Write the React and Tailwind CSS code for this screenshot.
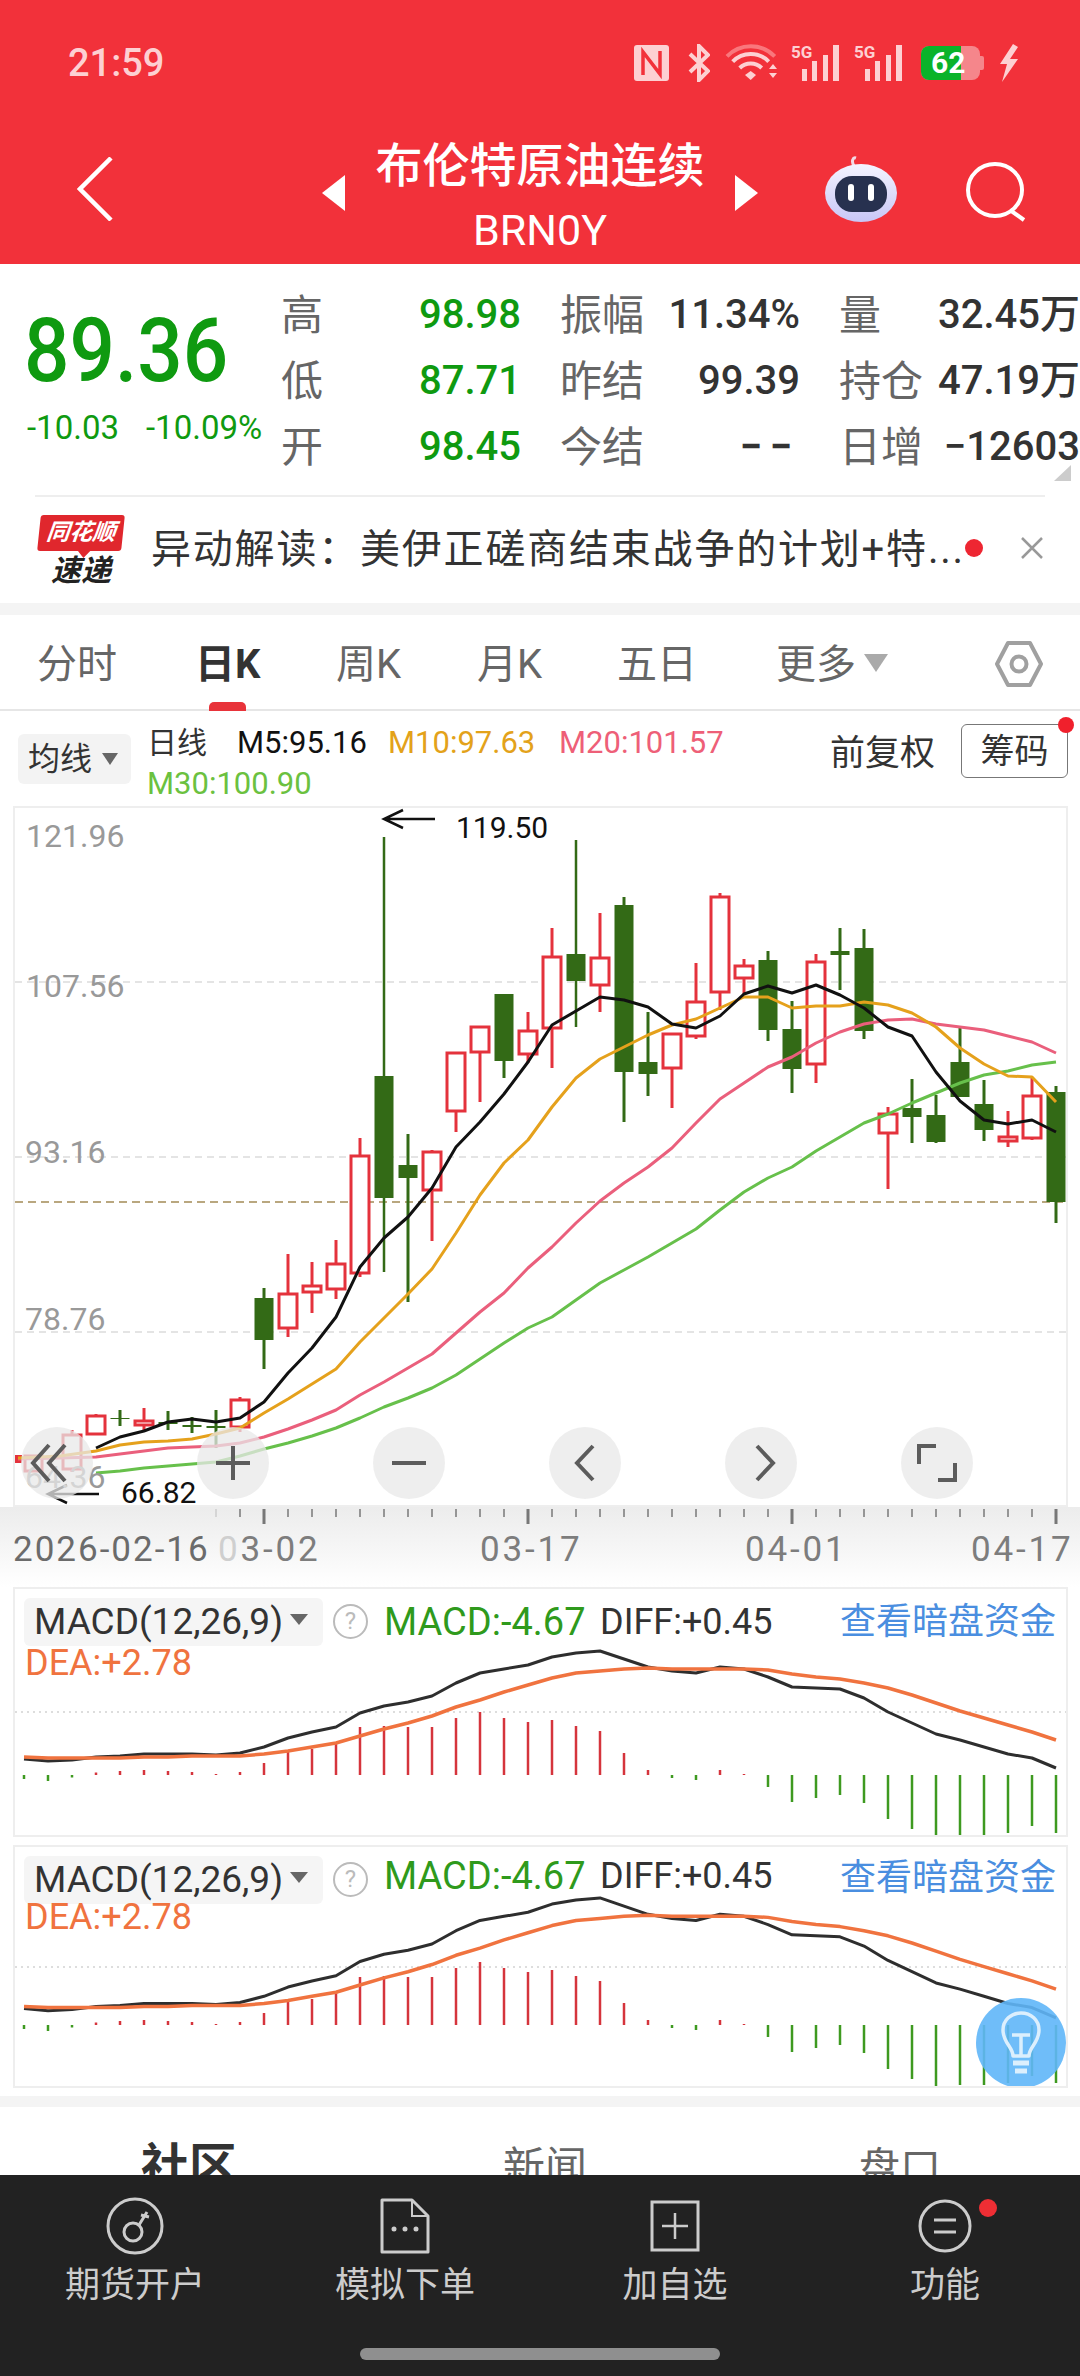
import React from "react";

// Daily candles: [x, high, bodyTop, bodyBottom, low, direction]
const candles = [
  [72, 1430, 1434, 1470, 1472, "r"], [96, 1414, 1415, 1435, 1435, "r"], [120, 1410, 1418, 1419, 1426, "g"],
  [144, 1408, 1420, 1426, 1430, "r"], [168, 1411, 1422, 1424, 1430, "g"], [192, 1417, 1425, 1427, 1433, "g"],
  [216, 1410, 1426, 1428, 1448, "g"], [240, 1397, 1399, 1428, 1432, "r"], [264, 1288, 1298, 1340, 1369, "g"],
  [288, 1254, 1293, 1329, 1337, "r"], [312, 1262, 1285, 1293, 1313, "r"], [336, 1240, 1263, 1290, 1299, "r"],
  [360, 1138, 1155, 1274, 1277, "r"], [384, 837, 1076, 1198, 1272, "g"], [408, 1134, 1165, 1178, 1302, "g"],
  [432, 1150, 1151, 1191, 1241, "r"], [456, 1052, 1052, 1112, 1132, "r"], [480, 1026, 1026, 1053, 1102, "r"],
  [504, 994, 994, 1061, 1078, "g"], [528, 1012, 1030, 1055, 1063, "r"], [552, 928, 956, 1029, 1068, "r"],
  [576, 840, 954, 981, 1027, "g"], [600, 913, 957, 986, 1012, "r"], [624, 897, 905, 1072, 1122, "g"],
  [648, 1012, 1062, 1074, 1096, "g"], [672, 1033, 1033, 1069, 1108, "r"], [696, 963, 1001, 1037, 1039, "r"],
  [720, 893, 896, 993, 1010, "r"], [744, 959, 965, 979, 995, "r"], [768, 951, 960, 1030, 1041, "g"],
  [792, 1001, 1029, 1069, 1093, "g"], [816, 954, 961, 1065, 1083, "r"], [840, 928, 951, 955, 990, "g"],
  [864, 929, 948, 1031, 1039, "g"], [888, 1107, 1113, 1134, 1189, "r"], [912, 1079, 1108, 1117, 1143, "g"],
  [936, 1095, 1115, 1142, 1143, "g"], [960, 1027, 1062, 1097, 1097, "g"], [984, 1080, 1104, 1130, 1141, "g"],
  [1008, 1111, 1136, 1142, 1147, "r"], [1032, 1077, 1095, 1139, 1140, "r"], [1056, 1086, 1092, 1202, 1223, "g"],
];

const m5 = [1448,1437,1431,1422,1419,1422,1418,1402,1373,1348,1317,1267,1238,1217,1188,1147,1122,1094,1062,1025,1011,997,1000,1007,1024,1028,1016,994,986,993,985,995,1008,1027,1036,1072,1101,1120,1124,1120,1132];
const m10 = [1451,1445,1442,1441,1439,1434,1428,1413,1399,1384,1369,1342,1318,1294,1269,1233,1195,1163,1140,1107,1078,1059,1047,1035,1025,1019,1008,997,997,1008,1006,1006,1002,1005,1013,1027,1048,1064,1076,1077,1102];
const m20 = [1457,1454,1451,1448,1447,1446,1443,1437,1429,1420,1410,1395,1382,1368,1354,1333,1312,1293,1268,1247,1223,1201,1183,1167,1148,1123,1099,1083,1067,1057,1043,1032,1024,1020,1019,1024,1027,1030,1036,1042,1053];
const m30 = [1473,1471,1468,1466,1464,1462,1456,1449,1443,1436,1428,1418,1407,1398,1388,1375,1359,1343,1328,1317,1300,1283,1270,1257,1243,1229,1210,1192,1178,1167,1151,1137,1123,1114,1103,1093,1083,1075,1071,1065,1062];

const line = (ys, start = 96, lead = "") =>
  lead + ys.map((y, i) => `${start + 24 * i},${y}`).join(" ");

// MACD series, page y in the first panel
const diff = [1759,1761,1760,1757,1756,1754,1754,1754,1755,1753,1747,1738,1732,1727,1713,1706,1702,1696,1683,1673,1669,1665,1657,1653,1651,1659,1667,1671,1673,1667,1669,1677,1687,1688,1689,1698,1712,1723,1734,1740,1747,1754,1758,1768];
const dea = [1757,1758,1758,1758,1758,1757,1757,1756,1756,1756,1754,1751,1747,1743,1736,1729,1723,1716,1707,1700,1692,1685,1678,1673,1671,1669,1668,1669,1669,1669,1669,1670,1674,1677,1679,1683,1688,1695,1703,1711,1718,1725,1732,1740];
const hist = [-4,-6,-2.5,2.5,4,5,4,3,1,3,12,23,26,33,48,49,48,48,57,63,57,53,55,49,44,22,5,-3,-5,5,1,-12,-27,-23,-20,-28,-44,-54,-62,-60,-60,-58,-51,-58];

function Candle({ c }) {
  const [x, hi, top, bot, lo, dir] = c;
  const colour = dir === "r" ? "#e4323c" : "#336a16";
  return (
    <g>
      <line x1={x} x2={x} y1={hi} y2={lo} stroke={colour} strokeWidth={x === 384 || x === 576 ? 2.5 : 3} />
      {dir === "r" ? (
        <rect x={x - 9} y={top + 1} width={18} height={Math.max(bot - top - 2, 2)} fill="#fff" stroke={colour} strokeWidth={3} />
      ) : (
        <rect x={x - 9.5} y={top} width={19} height={bot - top} fill={colour} />
      )}
    </g>
  );
}

function KChart() {
  return (
    <svg className="absolute inset-0" width="1051" height="697" viewBox="15 808 1051 697">
      {[982, 1157, 1332].map((y) => (
        <line key={y} x1="15" x2="1066" y1={y} y2={y} stroke="#dcdcdc" strokeWidth="1.5" strokeDasharray="7 5" />
      ))}
      <line x1="15" x2="1066" y1="1202" y2="1202" stroke="#b9a77f" strokeWidth="2" strokeDasharray="8 5" />
      <rect x="13" y="1455" width="9" height="8" fill="#e4323c" />
      <rect x="25" y="1456" width="17" height="15" fill="#fff" stroke="#e4323c" strokeWidth="3" />
      {candles.map((c) => (
        <Candle key={c[0]} c={c} />
      ))}
      <g fill="none" strokeWidth="3" strokeLinejoin="round">
        <polyline points={line(m30)} stroke="#67c04b" />
        <polyline points={line(m20, 96, "18,1459 60,1458 ")} stroke="#ea5f7c" />
        <polyline points={line(m10, 96, "18,1458 60,1456 ")} stroke="#e5a11c" />
        <polyline points={line(m5)} stroke="#111111" />
      </g>
      <path d="M384 819H435M403 810L384 819L403 828" fill="none" stroke="#111" strokeWidth="2.5" />
      <path d="M48 1494H99M67 1485L48 1494L67 1503" fill="none" stroke="#111" strokeWidth="2.5" />
    </svg>
  );
}

function RoundButton({ children }) {
  return (
    <div className="w-[72px] h-[72px] rounded-full bg-[#e8e8e8]/75 flex items-center justify-center">
      <svg width="72" height="72" viewBox="0 0 72 72" fill="none" stroke="#5c5c5c" strokeWidth="4">
        {children}
      </svg>
    </div>
  );
}

function MacdPanel({ top, height, stretch, zero, dotted, dense }) {
  const mapY = (y) => zero - (1775 - y) * stretch;
  const pts = (arr) => arr.map((y, i) => `${24 + 24 * i},${mapY(y)}`).join(" ");
  return (
    <div className={`relative ml-[13px] w-[1055px] border-2 border-[#eeeeee] overflow-hidden ${height}`}>
      <svg className="absolute inset-0" width="1051" height="250" viewBox={`15 ${top + 2} 1051 250`}>
        <line x1="15" x2="1066" y1={dotted} y2={dotted} stroke="#dddddd" strokeWidth="2" strokeDasharray="2 4" />
        {hist.map((h, i) => (
          <line key={i} x1={24 + 24 * i} x2={24 + 24 * i} y1={zero} y2={zero - h} stroke={h > 0 ? "#d5343c" : "#3e9a20"} strokeWidth="2.5" />
        ))}
        <polyline points={pts(diff)} fill="none" stroke="#2e2e2e" strokeWidth="3" strokeLinejoin="round" />
        <polyline points={pts(dea)} fill="none" stroke="#f0733f" strokeWidth="3.5" strokeLinejoin="round" />
      </svg>
      <div className="relative flex items-start pl-[9px] pt-[9px]">
        <div className="w-[299px] h-[48px] rounded-[6px] bg-[#f4f4f4]/90 flex items-center pl-[10px] text-[37px] text-[#333333]">
          MACD(12,26,9)
          <span className="ml-[7px] -mt-[6px] w-0 h-0 border-x-[9px] border-x-transparent border-t-[11px] border-t-[#666666]" />
        </div>
        <div className="ml-[10px] mt-[6px] w-[35px] h-[35px] rounded-full border-2 border-[#bbbbbb] text-[#bbbbbb] text-[24px] leading-[31px] text-center">?</div>
        <div className={`ml-[16px] flex items-center leading-[40px] ${dense ? "" : "mt-[4px]"}`}>
          <span className="w-[216px] text-[38px] text-[#2f9a1c]">MACD:-4.67</span>
          <span className="w-[240px] text-[36px] text-[#333333]">DIFF:+0.45</span>
        </div>
        <span className={`text-[36px] leading-[40px] text-[#4a8ee0] whitespace-nowrap ${dense ? "mt-[2px]" : "mt-[4px]"}`}>查看暗盘资金</span>
      </div>
      <div className={`relative pl-[10px] text-[36px] leading-[40px] text-[#f0733f] ${dense ? "-mt-[7px]" : "-mt-[3px]"}`}>DEA:+2.78</div>
      {dense && (
        <div className="absolute right-0 -bottom-[2px] w-[90px] h-[90px] rounded-full bg-[#5fb6f8]/90 flex items-center justify-center">
          <svg width="44" height="64" viewBox="0 0 44 64" fill="none" stroke="#dcefFd" strokeWidth="3.5" strokeLinejoin="round">
            <path d="M14 45C14 36 4 32 4 19C4 9 12 2 22 2S40 9 40 19C40 32 30 36 30 45Z" />
            <path d="M13 24H31M22 24V45" />
            <path d="M14 52H30M16 60H28" strokeWidth="5" />
          </svg>
        </div>
      )}
    </div>
  );
}

function Signal() {
  return (
    <div className="relative w-[48px] h-[36px]">
      <span className="absolute left-0 -top-[2px] text-[17px] leading-[18px] font-bold text-[#fdd0d2]">5G</span>
      <svg className="absolute inset-0" width="48" height="36" viewBox="0 0 48 36" fill="#fdd0d2">
        <rect x="11" y="24" width="5" height="12" />
        <rect x="21" y="16" width="5" height="20" />
        <rect x="32" y="10" width="5" height="26" />
        <rect x="42" y="0" width="6" height="36" />
      </svg>
    </div>
  );
}

const statRows = [
  ["高", "98.98", "振幅", "11.34%", "量", "32.45万"],
  ["低", "87.71", "昨结", "99.39", "持仓", "47.19万"],
  ["开", "98.45", "今结", "−−", "日增", "−12603"],
];

function BottomItem({ label, dot, children }) {
  return (
    <div className="relative flex flex-col items-center pt-[21px]">
      <svg width="70" height="60" viewBox="0 0 70 60" fill="none" stroke="#cccccc" strokeWidth="3">
        {children}
      </svg>
      <span className="mt-[10px] text-[35px] leading-[40px] text-[#cccccc] whitespace-nowrap">{label}</span>
      {dot && <span className="absolute left-[169px] top-[24px] w-[18px] h-[18px] rounded-full bg-[#ee2e34]" />}
    </div>
  );
}

const tickXs = Array.from({ length: 36 }, (_, i) => 216 + 24 * i);

export default function App() {
  return (
    <div className="relative w-[1080px] h-[2376px] overflow-hidden bg-white font-['Roboto','Noto_Sans_CJK_SC',sans-serif]">
      {/* Title bar */}
      <header className="h-[264px] bg-[#f2313a] text-white">
        <div className="h-[126px] flex items-center pl-[68px] pr-[61px]">
          <span className="text-[38px] font-medium text-[#fdd0d2]">21:59</span>
          <div className="ml-auto flex items-center">
            <svg width="35" height="36" viewBox="0 0 35 36">
              <rect width="35" height="36" rx="3" fill="#fdd0d2" />
              <path d="M9 30V7L26 29V6" fill="none" stroke="#f2313a" strokeWidth="3.5" />
            </svg>
            <svg className="ml-[19px]" width="22" height="38" viewBox="0 0 22 38" fill="none" stroke="#fdd0d2" strokeWidth="4">
              <path d="M2 10L20 27L11 36V2L20 11L2 28" />
            </svg>
            <svg className="ml-[18px] overflow-visible" width="49" height="36" viewBox="0 0 49 36" fill="none" strokeWidth="4">
              <path d="M-1 11.4A33 33 0 0 1 46.7 11.4" stroke="#f9777c" />
              <path d="M4.7 16.6A25 25 0 0 1 40.7 16.6" stroke="#fdd0d2" />
              <path d="M11.7 23A16 16 0 0 1 33.7 23" stroke="#fdd0d2" />
              <path d="M17 30L22.7 26L28 30L22.7 35Z" fill="#fdd0d2" />
              <path d="M41 24L45 19L49 24ZM41 28L45 33L49 28Z" fill="#fdd0d2" />
            </svg>
            <div className="ml-[14px]"><Signal /></div>
            <div className="ml-[15px]"><Signal /></div>
            <div className="relative ml-[19px] w-[64px] h-[36px] flex items-center">
              <div className="w-[59px] h-[34px] rounded-[8px] overflow-hidden bg-[#f5868b]">
                <div className="w-[40px] h-full bg-[#0ab32a]" />
              </div>
              <span className="w-[4px] h-[14px] rounded-r-[2px] bg-[#f5868b]" />
              <span className="absolute left-[10px] top-0 text-[30px] leading-[36px] font-bold text-white">62</span>
            </div>
            <svg className="ml-[14px]" width="20" height="38" viewBox="0 0 20 38" fill="#fdd0d2">
              <path d="M14 0L1 20L8 20L3 38L19 15L11 15L19 3Z" />
            </svg>
          </div>
        </div>
        <div className="flex items-start pl-[77px]">
          <svg className="mt-[31px]" width="36" height="64" viewBox="0 0 36 64" fill="none" stroke="#ffffff" strokeWidth="4.5">
            <path d="M34 1L3 32L34 63" />
          </svg>
          <span className="ml-[209px] mt-[49px] w-0 h-0 border-y-[18px] border-y-transparent border-r-[23px] border-r-white" />
          <div className="w-[390px] flex flex-col items-center mt-[15px]">
            <span className="text-[47px] leading-[50px] font-medium whitespace-nowrap">布伦特原油连续</span>
            <span className="mt-[14px] text-[43px] leading-[50px]">BRN0Y</span>
          </div>
          <span className="mt-[49px] w-0 h-0 border-y-[18px] border-y-transparent border-l-[23px] border-l-white" />
          <svg className="ml-[67px] mt-[30px]" width="72" height="66" viewBox="0 0 72 66">
            <defs>
              <linearGradient id="shell" x1="0" y1="0" x2="0" y2="1">
                <stop offset="0" stopColor="#f4f4ff" />
                <stop offset="1" stopColor="#c8c6f6" />
              </linearGradient>
            </defs>
            <path d="M29 10C26 5 28 1 31 2" fill="none" stroke="#f2d9e4" strokeWidth="3" />
            <ellipse cx="36" cy="37" rx="36" ry="29" fill="url(#shell)" />
            <rect x="10" y="20" width="52" height="36" rx="17" fill="#27314f" />
            <rect x="23" y="28" width="6" height="17" rx="3" fill="#fff" />
            <rect x="43" y="28" width="6" height="17" rx="3" fill="#fff" />
          </svg>
          <svg className="ml-[69px] mt-[36px]" width="60" height="60" viewBox="0 0 60 60" fill="none" stroke="#ffffff" strokeWidth="4">
            <ellipse cx="29" cy="28" rx="27" ry="26" />
            <path d="M44 48L58 58" />
          </svg>
        </div>
      </header>

      {/* Quote figures */}
      <section className="h-[231px] flex">
        <div className="w-[281px] pl-[27px]">
          <div className="-ml-[3px] mt-[42px] text-[80px] leading-[90px] font-medium text-[#0f9a10] scale-y-[1.12] origin-left">89.36</div>
          <div className="mt-[12px] flex text-[33px] leading-[40px] text-[#0f9a10]">
            <span className="w-[119px]">-10.03</span>
            <span>-10.09%</span>
          </div>
        </div>
        <div className="pt-[18px] w-[799px] overflow-hidden">
          {statRows.map((r) => (
            <div key={r[0]} className="h-[66px] flex items-center text-[40px] font-medium whitespace-nowrap">
              <span className="w-[41px] text-[42px] font-normal text-[#666666]">{r[0]}</span>
              <span className="w-[199px] text-right text-[#0f9a10]">{r[1]}</span>
              <span className="ml-[39px] w-[85px] text-[42px] font-normal text-[#666666]">{r[2]}</span>
              <span className={`w-[155px] text-right text-[#333333] ${r[3] === "−−" ? "font-bold tracking-[8px]" : ""}`}>{r[3]}</span>
              <span className="ml-[39px] w-[84px] text-[42px] font-normal text-[#666666]">{r[4]}</span>
              <span className="w-[157px] text-right text-[#333333]">{r[5]}</span>
            </div>
          ))}
        </div>
      </section>
      <svg className="absolute left-[1054px] top-[465px]" width="17" height="16" viewBox="0 0 17 16">
        <path d="M17 0V16H0Z" fill="#cccccc" />
      </svg>

      {/* News ticker */}
      <div className="mx-[35px] h-[2px] bg-[#eeeeee]" />
      <div className="h-[106px] flex items-center pl-[38px]">
        <div className="w-[86px] flex flex-col items-center">
          <div className="relative w-[84px] h-[36px] bg-[#e0272d] -skew-x-6 rounded-[3px] flex items-center justify-center">
            <span className="text-[23px] leading-[30px] font-bold italic text-white whitespace-nowrap">同花顺</span>
            <span className="absolute left-[40px] top-[35px] w-0 h-0 border-x-[7px] border-x-transparent border-t-[8px] border-t-[#e0272d]" />
          </div>
          <span className="mt-[5px] text-[30px] leading-[30px] font-bold italic text-[#222222] whitespace-nowrap">速递</span>
        </div>
        <span className="ml-[27px] text-[40px] leading-[50px] tracking-[1.8px] text-[#333333] whitespace-nowrap">异动解读：美伊正磋商结束战争的计划+特...</span>
        <span className="absolute left-[965px] top-[539px] w-[18px] h-[18px] rounded-full bg-[#ee2632]" />
        <svg className="absolute left-[1021px] top-[537px]" width="22" height="22" viewBox="0 0 22 22" stroke="#999999" strokeWidth="2.5">
          <path d="M1 1L21 21M21 1L1 21" />
        </svg>
      </div>
      <div className="h-[12px] bg-[#f4f4f4]" />

      {/* Period tabs */}
      <nav className="relative h-[96px] pt-[6px] border-b-2 border-[#e6e6e6] flex items-center text-[40px] text-[#666666] whitespace-nowrap">
        <span className="absolute left-[37px]">分时</span>
        <span className="absolute left-[195px] font-bold text-[#333333]">日K</span>
        <span className="absolute left-[336px]">周K</span>
        <span className="absolute left-[477px]">月K</span>
        <span className="absolute left-[617px]">五日</span>
        <span className="absolute left-[776px]">更多</span>
        <span className="absolute left-[864px] top-[39px] w-0 h-0 border-x-[12px] border-x-transparent border-t-[18px] border-t-[#aaaaaa]" />
        <svg className="absolute left-[995px] top-[26px]" width="48" height="46" viewBox="0 0 48 46" fill="none" stroke="#a0a0a0" strokeWidth="4">
          <path d="M13 2H35L46 23L35 44H13L2 23Z" strokeLinejoin="round" />
          <circle cx="24" cy="23" r="7.5" />
        </svg>
        <span className="absolute left-[209px] -bottom-[2px] w-[37px] h-[9px] rounded-t-[5px] bg-[#e8333a]" />
      </nav>

      {/* Moving-average legend */}
      <div className="relative h-[95px]">
        <div className="absolute left-[18px] top-[23px] w-[113px] h-[50px] rounded-[6px] bg-[#f3f3f3] flex items-center pl-[10px] text-[32px] text-[#333333]">
          均线
          <span className="ml-[10px] w-0 h-0 border-x-[8px] border-x-transparent border-t-[12px] border-t-[#666666]" />
        </div>
        <div className="absolute left-[147px] top-[14px] text-[31px] leading-[36px] whitespace-nowrap">
          <div className="flex items-center">
            <span className="w-[90px] text-[30px] text-[#333333]">日线</span>
            <span className="w-[151px] text-[#111111]">M5:95.16</span>
            <span className="w-[171px] text-[#e3a21a]">M10:97.63</span>
            <span className="text-[#ee5f78]">M20:101.57</span>
          </div>
          <div className="mt-[5px] text-[#6bc13f]">M30:100.90</div>
        </div>
        <span className="absolute left-[830px] top-[21px] text-[35px] leading-[44px] text-[#333333] whitespace-nowrap">前复权</span>
        <div className="absolute left-[961px] top-[13px] w-[107px] h-[54px] rounded-[6px] border border-[#777777] flex items-center justify-center text-[34px] text-[#333333]">筹码</div>
        <span className="absolute left-[1058px] top-[6px] w-[16px] h-[16px] rounded-full bg-[#f0202c]" />
      </div>

      {/* Candlestick chart */}
      <div className="relative ml-[13px] w-[1055px] h-[701px] border-2 border-[#eeeeee] overflow-hidden">
        <KChart />
        <span className="absolute left-[11px] top-[8px] text-[32px] leading-[40px] text-[#999999]">121.96</span>
        <span className="absolute left-[11px] top-[158px] text-[32px] leading-[40px] text-[#999999]">107.56</span>
        <span className="absolute left-[10px] top-[324px] text-[32px] leading-[40px] text-[#999999]">93.16</span>
        <span className="absolute left-[10px] top-[491px] text-[32px] leading-[40px] text-[#999999]">78.76</span>
        <span className="absolute left-[10px] top-[649px] text-[32px] leading-[40px] text-[#999999]">64.36</span>
        <span className="absolute left-[441px] top-0 text-[30px] leading-[40px] text-[#111111]">119.50</span>
        <span className="absolute left-[106px] top-[665px] text-[30px] leading-[40px] text-[#111111]">66.82</span>
        <div className="absolute left-[6px] top-[619px] flex gap-[104px]">
          <RoundButton><path d="M28 18L12 36L28 54M44 18L28 36L44 54" /></RoundButton>
          <RoundButton><path d="M19 36H53M36 19V53" /></RoundButton>
          <RoundButton><path d="M19 36H53" /></RoundButton>
          <RoundButton><path d="M44 19L28 36L44 53" /></RoundButton>
          <RoundButton><path d="M32 19L48 36L32 53" /></RoundButton>
          <RoundButton><path d="M18 37V19H35M54 36V53H37" /></RoundButton>
        </div>
      </div>

      {/* Date axis */}
      <div className="relative h-[80px] bg-gradient-to-b from-[#ececec] to-[#ffffff]">
        <svg className="absolute left-0 top-0" width="1080" height="20" viewBox="0 0 1080 20">
          {tickXs.map((x) => {
            const major = x === 264 || x === 528 || x === 792 || x === 1056;
            return <line key={x} x1={x} x2={x} y1="2" y2={major ? 17 : 10} stroke={x < 240 ? "#cccccc" : "#777777"} strokeWidth={major ? 3 : 1.5} />;
          })}
        </svg>
        <div className="flex pl-[13px] pt-[22px] text-[35px] leading-[42px] tracking-[2px] text-[#6b6b6b] whitespace-nowrap">
          <span className="w-[205px]">2026-02-16</span>
          <span className="w-[262px] tracking-[2.8px] text-[#7d7d7d]"><span className="text-[#cfcfcf]">0</span>3-02</span>
          <span className="w-[265px] tracking-[2.8px] text-[#7d7d7d]">03-17</span>
          <span className="w-[226px] tracking-[2.8px] text-[#7d7d7d]">04-01</span>
          <span className="tracking-[2.8px] text-[#7d7d7d]">04-17</span>
        </div>
      </div>

      {/* Indicator panels */}
      <MacdPanel top={1587} height="h-[250px]" stretch={1} zero={1775} dotted={1712} />
      <div className="h-[8px]" />
      <MacdPanel top={1845} height="h-[243px]" stretch={1.025} zero={2025} dotted={1967} dense />
      <div className="h-[8px]" />
      <div className="h-[11px] bg-[#f4f4f4]" />

      {/* Section tabs, cut off by the action bar */}
      <div className="relative h-[68px] overflow-hidden whitespace-nowrap">
        <span className="absolute left-[141px] top-[32px] text-[48px] leading-[56px] font-bold text-[#333333]">社区</span>
        <span className="absolute left-[503px] top-[33px] text-[42px] leading-[56px] text-[#666666]">新闻</span>
        <span className="absolute left-[859px] top-[33px] text-[41px] leading-[56px] text-[#666666]">盘口</span>
      </div>

      {/* Bottom action bar */}
      <footer className="h-[201px] bg-[#222222]">
        <div className="grid grid-cols-4">
          <BottomItem label="期货开户">
            <circle cx="35" cy="30" r="27" />
            <circle cx="33" cy="36" r="9" />
            <path d="M39 29L47 16M41 19L49 21" />
          </BottomItem>
          <BottomItem label="模拟下单">
            <path d="M12 4H42L58 20V56H12Z" strokeLinejoin="round" />
            <path d="M42 4V20H58" strokeWidth="2" />
            <path d="M24 33h.01M35 33h.01M46 33h.01" strokeWidth="5" strokeLinecap="round" />
          </BottomItem>
          <BottomItem label="加自选">
            <rect x="12" y="6" width="46" height="48" />
            <path d="M22 30H48M35 17V43" strokeWidth="2.5" />
          </BottomItem>
          <BottomItem label="功能" dot>
            <circle cx="35" cy="30" r="25" />
            <path d="M24 24H46M24 36H46" />
          </BottomItem>
        </div>
        <div className="mt-[42px] mx-auto w-[360px] h-[12px] rounded-full bg-[#8f8f8f]" />
      </footer>
    </div>
  );
}
